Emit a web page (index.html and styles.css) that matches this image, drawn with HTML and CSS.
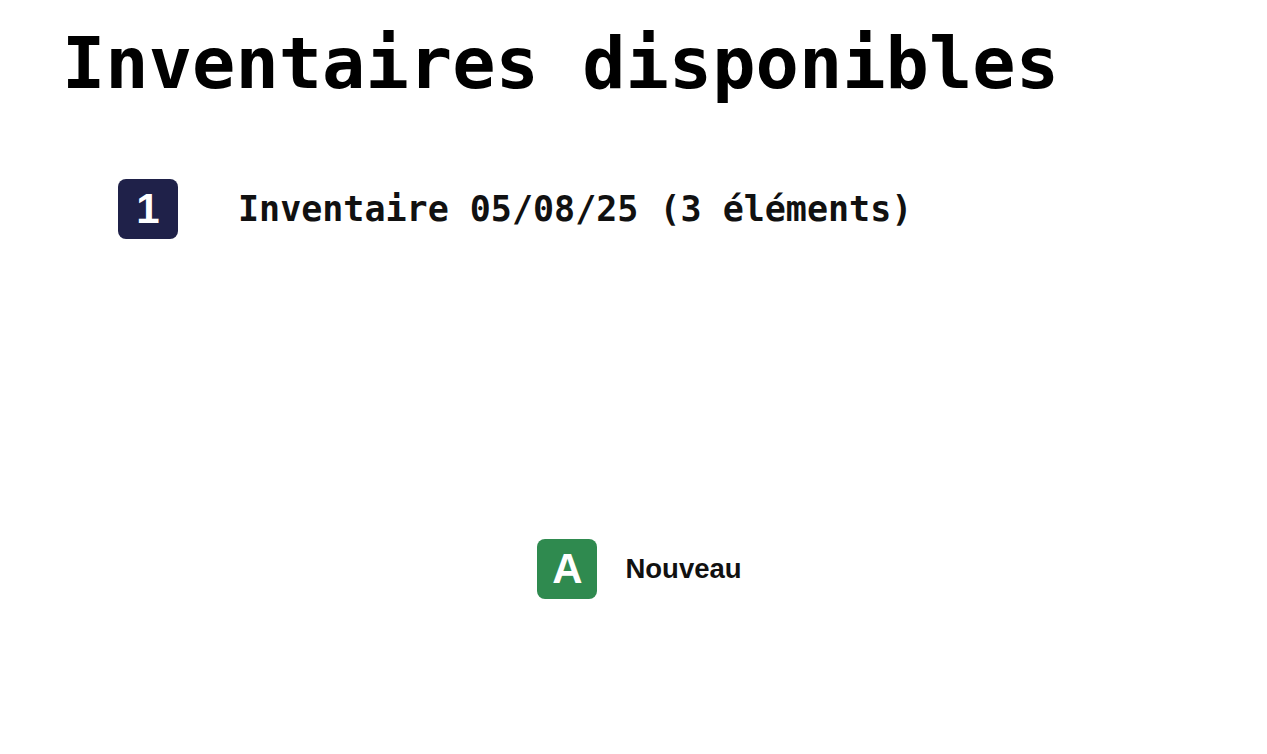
FILE: index.html
```html
<!DOCTYPE html>
<html lang="fr">
<head>
<meta charset="utf-8">
<title>Inventaires disponibles</title>
<link rel="stylesheet" href="styles.css">
</head>
<body>
<main class="page">
  <h1 class="title">Inventaires disponibles</h1>
  <ul class="list">
    <li class="item">
      <span class="badge badge-navy">1</span>
      <span class="item-label">Inventaire 05/08/25 (3 éléments)</span>
    </li>
  </ul>
  <div class="actions">
    <div class="action">
      <span class="badge badge-green">A</span>
      <span class="action-label">Nouveau</span>
    </div>
  </div>
</main>
</body>
</html>
```
FILE: styles.css
```css
html, body {
  margin: 0;
  padding: 0;
  background: #ffffff;
}
.page {
  width: 1267px;
  height: 754px;
  display: flex;
  flex-direction: column;
  box-sizing: border-box;
  padding-top: 27px;
}
.title {
  margin: 0 0 0 62px;
  font-family: "DejaVu Sans Mono", "Liberation Mono", monospace;
  font-weight: bold;
  font-size: 72px;
  line-height: 72px;
  color: #000;
}
.list {
  list-style: none;
  margin: 80px 0 0 118px;
  padding: 0;
}
.item {
  display: flex;
  align-items: center;
  gap: 60px;
}
.badge {
  width: 60px;
  height: 60px;
  border-radius: 8px;
  display: flex;
  align-items: center;
  justify-content: center;
  flex: none;
  color: #fff;
  font-family: "Liberation Sans", Arial, sans-serif;
  font-weight: bold;
  font-size: 42px;
  line-height: 1;
}
.badge-navy {
  background: #1f2149;
}
.badge-green {
  background: #2f8a4f;
}
.item-label {
  font-family: "DejaVu Sans Mono", "Liberation Mono", monospace;
  font-weight: bold;
  font-size: 35px;
  color: #111;
}
.actions {
  margin-top: 300px;
  display: flex;
  justify-content: center;
}
.action {
  display: flex;
  align-items: center;
  gap: 28px;
  margin-left: 12px;
}
.action-label {
  font-family: "Liberation Sans", Arial, sans-serif;
  font-weight: bold;
  font-size: 27.5px;
  color: #111;
}
```
